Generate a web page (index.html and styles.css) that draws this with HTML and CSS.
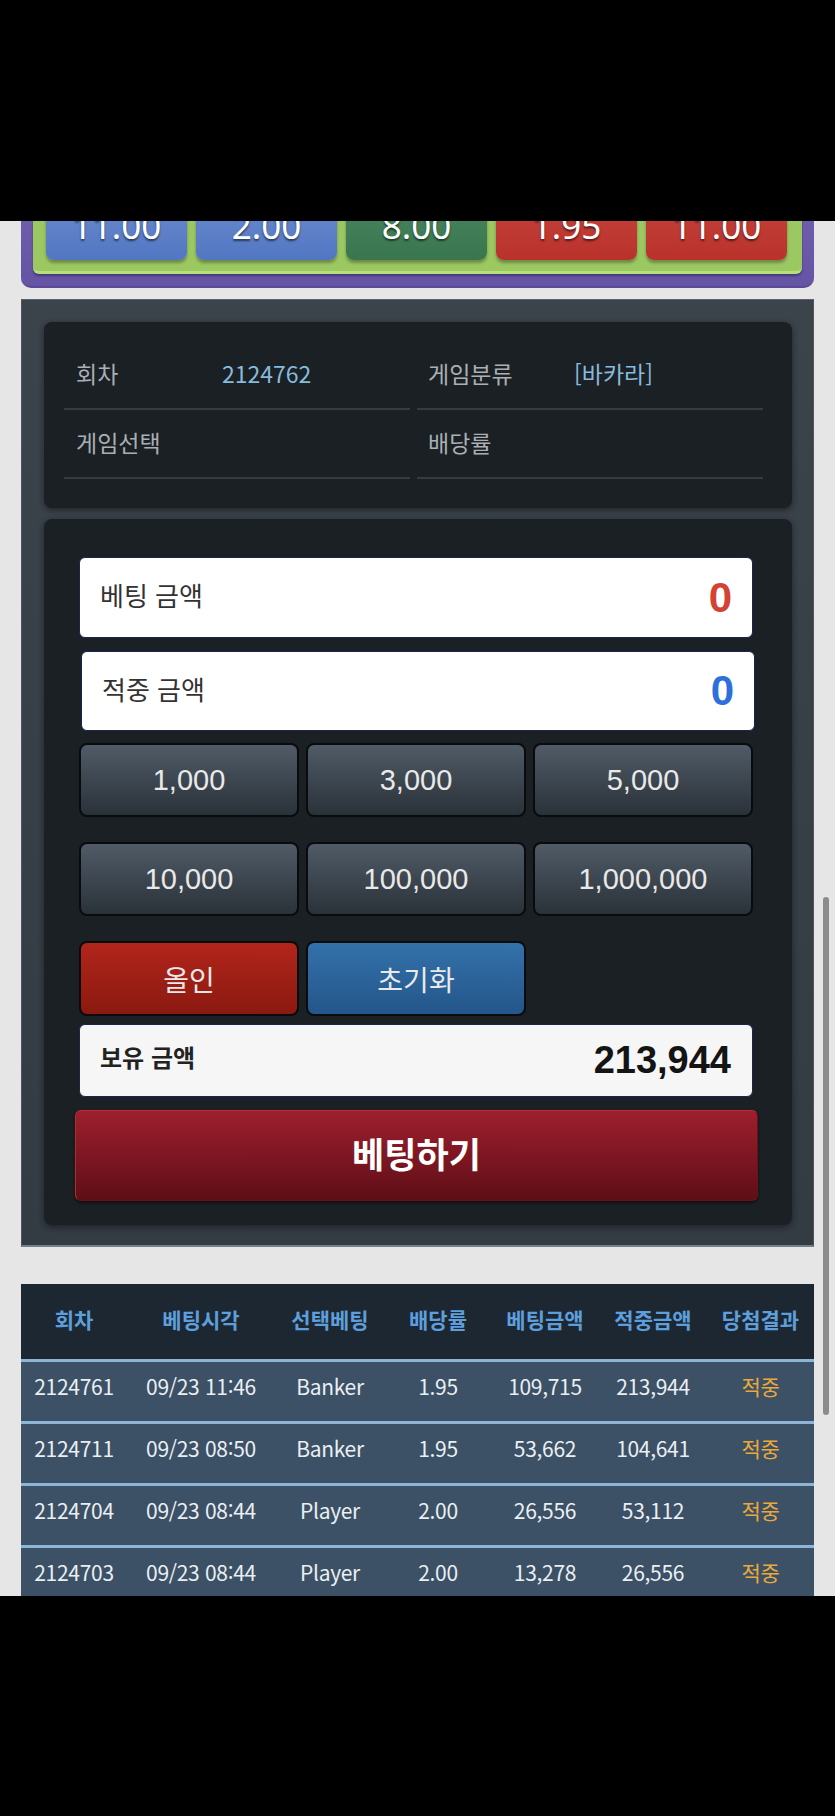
FILE: index.html
```html
<!DOCTYPE html>
<html lang="ko">
<head>
<meta charset="utf-8">
<title>베팅</title>
<link rel="stylesheet" href="styles.css">
</head>
<body>
<div class="topbar"></div>
<div class="screen">
  <div class="content">
    <section class="odds">
      <div class="odds-inner">
        <div class="odd blue">11.00</div>
        <div class="odd blue">2.00</div>
        <div class="odd green">8.00</div>
        <div class="odd red">1.95</div>
        <div class="odd red">11.00</div>
      </div>
    </section>

    <section class="panel">
      <div class="card info">
        <div class="cell"><span class="lbl">회차</span><span class="val">2124762</span></div>
        <div class="cell"><span class="lbl">게임분류</span><span class="val">[바카라]</span></div>
        <div class="cell"><span class="lbl">게임선택</span><span class="val"></span></div>
        <div class="cell"><span class="lbl">배당률</span><span class="val"></span></div>
      </div>

      <div class="card bet">
        <div class="field field-bet"><span class="f-label">베팅 금액</span><span class="f-value red-text">0</span></div>
        <div class="field field-win"><span class="f-label">적중 금액</span><span class="f-value blue-text">0</span></div>
        <div class="chips">
          <button class="chip">1,000</button>
          <button class="chip">3,000</button>
          <button class="chip">5,000</button>
          <button class="chip">10,000</button>
          <button class="chip">100,000</button>
          <button class="chip">1,000,000</button>
          <button class="chip allin">올인</button>
          <button class="chip reset">초기화</button>
        </div>
        <div class="holding"><span class="h-label">보유 금액</span><span class="h-value">213,944</span></div>
        <button class="submit">베팅하기</button>
      </div>
    </section>

    <table class="history">
      <colgroup>
        <col class="c1"><col class="c2"><col class="c3"><col class="c4"><col class="c5"><col class="c6"><col class="c7">
      </colgroup>
      <thead>
        <tr><th>회차</th><th>베팅시각</th><th>선택베팅</th><th>배당률</th><th>베팅금액</th><th>적중금액</th><th>당첨결과</th></tr>
      </thead>
      <tbody>
        <tr><td>2124761</td><td>09/23 11:46</td><td>Banker</td><td>1.95</td><td>109,715</td><td>213,944</td><td class="hit">적중</td></tr>
        <tr><td>2124711</td><td>09/23 08:50</td><td>Banker</td><td>1.95</td><td>53,662</td><td>104,641</td><td class="hit">적중</td></tr>
        <tr><td>2124704</td><td>09/23 08:44</td><td>Player</td><td>2.00</td><td>26,556</td><td>53,112</td><td class="hit">적중</td></tr>
        <tr><td>2124703</td><td>09/23 08:44</td><td>Player</td><td>2.00</td><td>13,278</td><td>26,556</td><td class="hit">적중</td></tr>
      </tbody>
    </table>
  </div>
  <div class="scrollbar"></div>
</div>
<div class="bottombar"></div>
</body>
</html>
```

FILE: styles.css
```css
* { box-sizing: border-box; }

html, body {
  margin: 0;
  padding: 0;
  background: #000;
}

body {
  width: 835px;
  font-family: "Noto Sans CJK KR", "Noto Sans", sans-serif;
}

.topbar { height: 221px; background: #000; }
.bottombar { height: 220px; background: #000; }

.screen {
  position: relative;
  height: 1375px;
  overflow: hidden;
  background: #e6e6e6;
}

.content {
  padding: 0 21px;
}

/* ---------- odds panel ---------- */
.odds {
  margin-top: -73px;
  background: linear-gradient(#7868b4, #6553a4);
  border-bottom: 2px solid #5a4996;
  border-radius: 0 0 10px 10px;
  padding: 12px 12px 12px 12px;
}

.odds-inner {
  background: #9cc862;
  border-bottom: 3px solid #b7df7c;
  border-radius: 0 0 6px 6px;
  padding: 14px 15px 11px 13px;
  display: grid;
  grid-template-columns: repeat(5, 141px);
  column-gap: 9px;
  box-shadow: 0 2px 2px rgba(40, 30, 80, 0.5);
}

.odd {
  height: 86px;
  border-radius: 8px;
  color: #fff;
  font-family: "Noto Sans", sans-serif;
  font-size: 35px;
  line-height: 35px;
  padding-top: 34px;
  text-align: center;
  text-shadow: 0 2px 2px rgba(0, 0, 0, 0.55);
  box-shadow: 0 3px 3px rgba(0, 0, 0, 0.3);
}

.odd.blue { background: linear-gradient(#7393d4, #5276c2); }
.odd.green { background: linear-gradient(#4f8c66, #397650); }
.odd.red { background: linear-gradient(#cc4a43, #b9312b); }

/* ---------- main panel ---------- */
.panel {
  margin-top: 11px;
  background: linear-gradient(#3b434b, #333b43);
  border: 1px solid #4c565f;
  border-top: 1px solid #5a646e;
  border-bottom: 2px solid #76808b;
  padding: 22px 21px 20px 22px;
  display: flex;
  flex-direction: column;
  gap: 11px;
}

.card {
  background: #1b2024;
  border-radius: 8px;
  box-shadow: 0 2px 6px rgba(0, 0, 0, 0.45);
}

.info {
  display: grid;
  grid-template-columns: 346px 346px;
  column-gap: 7px;
  padding: 20px 29px 28px 20px;
  height: 186px;
}

.cell {
  height: 68px;
  border-bottom: 2px solid #343b41;
  display: flex;
  align-items: center;
  padding: 0 0 5px 12px;
  font-size: 23px;
}

.cell:nth-child(2n) { padding-left: 11px; }

.lbl {
  width: 146px;
  color: #a9afb4;
}

.val {
  color: #86bbde;
}

/* ---------- bet card ---------- */
.bet {
  padding: 38px 39px 24px 35px;
  font-family: "Liberation Sans", "Noto Sans CJK KR", sans-serif;
  display: flex;
  flex-direction: column;
}

.field {
  background: #fff;
  border: 1px solid #1b2350;
  border-radius: 6px;
  display: flex;
  align-items: center;
  justify-content: space-between;
  padding: 0 20px 0 20px;
}

.field-bet { height: 81px; margin-bottom: 13px; }
.field-win { height: 80px; margin: 0 -2px 12px 2px; }

.f-label {
  font-family: "Noto Sans CJK KR", sans-serif;
  font-size: 26px;
  color: #333;
  margin-top: -6px;
}

.f-value {
  font-size: 42px;
  font-weight: bold;
}

.red-text { color: #d34234; }
.blue-text { color: #2d6fdb; }

.chips {
  display: grid;
  grid-template-columns: repeat(3, 1fr);
  grid-template-rows: 74px 74px 75px;
  gap: 25px 7px;
  margin-bottom: 8px;
}

.chip {
  font-family: "Liberation Sans", "Noto Sans CJK KR", sans-serif;
  font-size: 29px;
  color: #e9e9e9;
  background: linear-gradient(#505b67, #2a3239);
  border: 2px solid #090b0d;
  border-radius: 8px;
  padding: 0;
  cursor: pointer;
}

.chip.allin {
  background: linear-gradient(#b2251c, #8a1910);
  font-family: "Noto Sans CJK KR", sans-serif;
  font-size: 28px;
}

.chip.reset {
  background: linear-gradient(#3471aa, #23568a);
  font-family: "Noto Sans CJK KR", sans-serif;
  font-size: 28px;
}

.holding {
  height: 73px;
  background: #f6f6f6;
  border: 1px solid #1b2350;
  border-radius: 6px;
  display: flex;
  align-items: center;
  justify-content: space-between;
  padding: 0 21px 0 20px;
  margin-bottom: 13px;
}

.h-label {
  font-family: "Noto Sans CJK KR", sans-serif;
  font-weight: bold;
  font-size: 24px;
  color: #222;
  margin-top: -8px;
}

.h-value {
  font-size: 38px;
  font-weight: bold;
  color: #141414;
}

.submit {
  height: 91px;
  margin: 0 -5px 0 -4px;
  padding: 0 0 6px;
  background: linear-gradient(#9e1f2e, #5e0e17);
  border: 1px solid #6a1218;
  border-top-color: #b8302f;
  border-left-color: #b0302c;
  border-radius: 6px;
  color: #fff;
  font-family: "Noto Sans CJK KR", sans-serif;
  font-weight: bold;
  font-size: 35px;
  box-shadow: 0 2px 3px rgba(0, 0, 0, 0.5);
  cursor: pointer;
}

/* ---------- history table ---------- */
.history {
  margin-top: 37px;
  width: 793px;
  border-collapse: collapse;
  table-layout: fixed;
  font-family: "Noto Sans CJK KR", sans-serif;
}

.c1 { width: 106px; }
.c2 { width: 148px; }
.c3 { width: 110px; }
.c4 { width: 106px; }
.c5 { width: 108px; }
.c6 { width: 108px; }
.c7 { width: 107px; }

.history th {
  height: 76px;
  background: #1d2731;
  color: #5d9fdd;
  font-size: 21px;
  font-weight: bold;
  padding: 0 0 5px;
  border-bottom: 3px solid #8db6d6;
  white-space: nowrap;
}

.history td {
  height: 62px;
  background: #3c5165;
  color: #eaeff3;
  font-size: 21px;
  text-align: center;
  padding: 0 0 10px;
  border-bottom: 3px solid #8db6d6;
  white-space: nowrap;
  letter-spacing: -0.3px;
}

.history td.hit { color: #eaa93a; }

.scrollbar {
  position: absolute;
  right: 6px;
  top: 676px;
  width: 6px;
  height: 518px;
  border-radius: 3px;
  background: #8c8c8c;
}
```
